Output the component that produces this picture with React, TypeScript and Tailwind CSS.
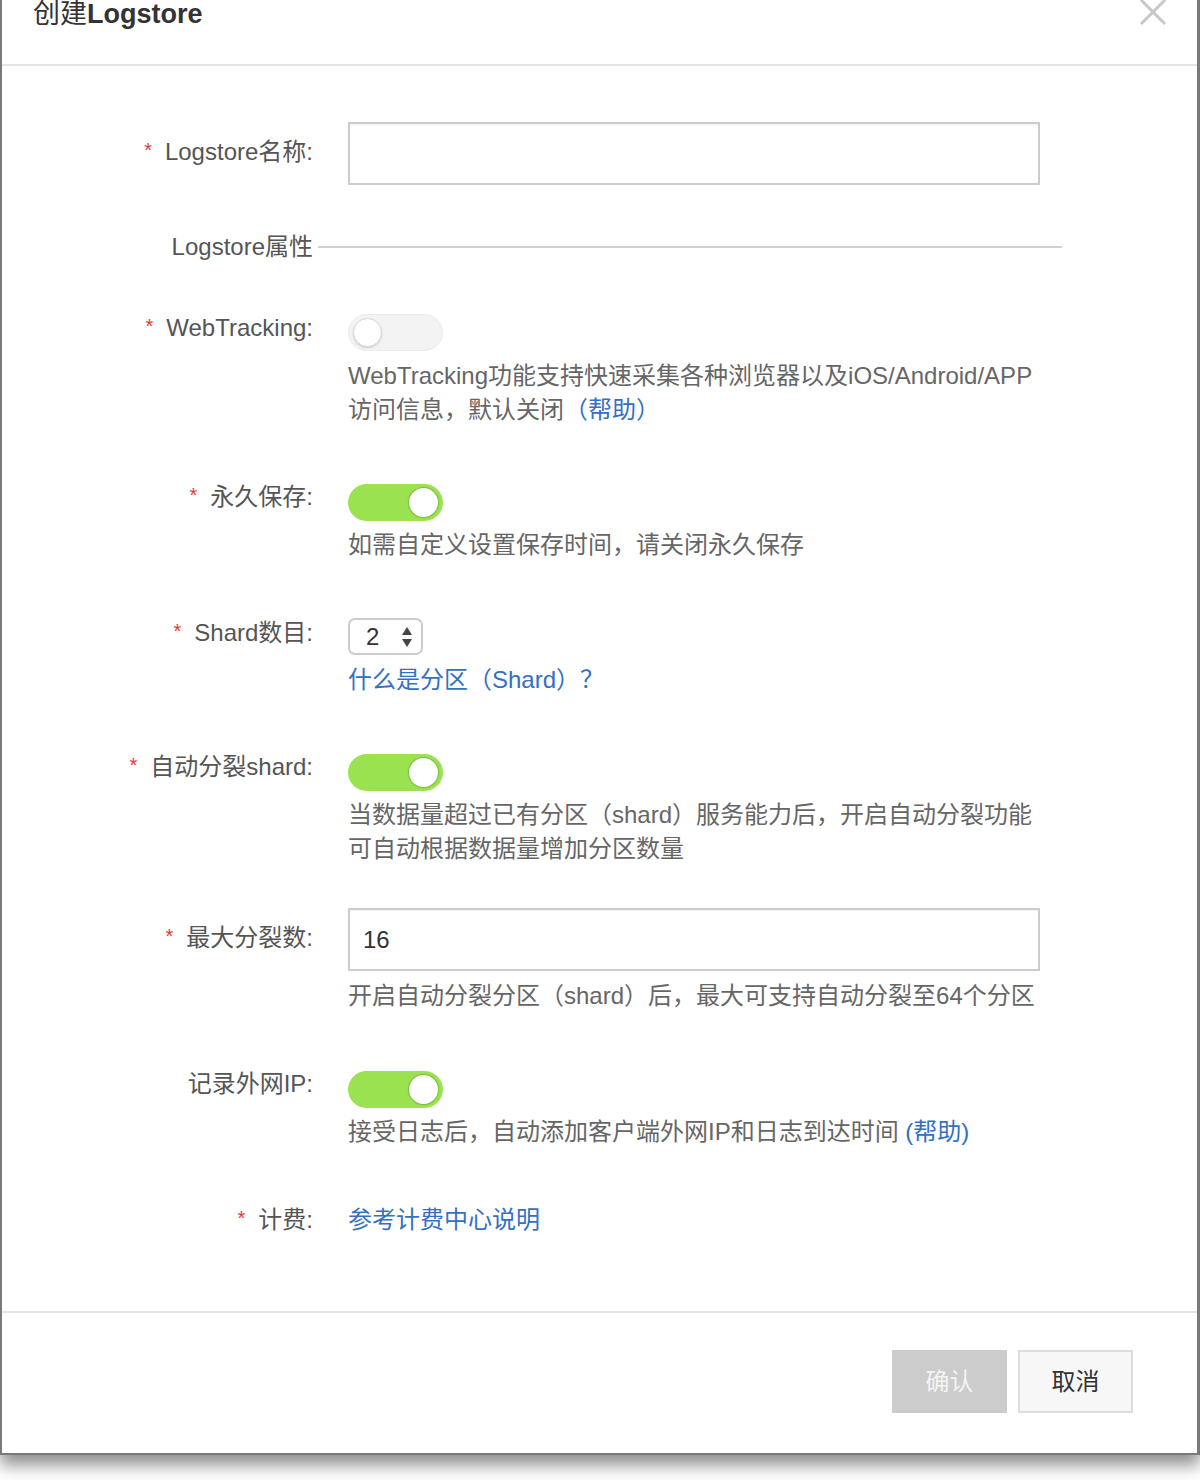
import React from "react";

const FONT = { fontFamily: '"Liberation Sans", "Noto Sans CJK SC", sans-serif' };

function Label({ text, required, mt }: { text: string; required?: boolean; mt: string }) {
  return (
    <div className={`w-[311px] shrink-0 text-right leading-[34px] text-[24px] text-[#555] whitespace-nowrap ${mt}`}>
      {required && <span className="text-[#e4393c] text-[20px] mr-[13px] relative -top-[3px]">*</span>}
      {text}
    </div>
  );
}

function SwitchOn() {
  return (
    <div className="relative w-[95px] h-[37px] rounded-full bg-[#9be250]">
      <div className="absolute right-[5px] top-[4px] w-[29px] h-[29px] rounded-full bg-white shadow-[0_0_1px_1px_rgba(60,120,20,0.35)]" />
    </div>
  );
}

function SwitchOff() {
  return (
    <div className="relative w-[95px] h-[37px] rounded-full bg-[#f3f3f3] border border-[#ececec]">
      <div className="absolute left-[4px] top-[3px] w-[29px] h-[29px] rounded-full bg-white border border-[#d8d8d8] shadow-[0_1px_2px_rgba(0,0,0,0.15)]" />
    </div>
  );
}

const desc = "text-[24px] leading-[34px] text-[#666] whitespace-nowrap";
const link = "text-[#3370c4]";

export default function App() {
  return (
    <div className="w-[1200px] h-[1480px] bg-white" style={FONT}>
      <div className="bg-white border-l-2 border-r-[3px] border-b-2 border-[#7a7a7a] shadow-[0_10px_16px_rgba(0,0,0,0.45)]">
        {/* header */}
        <div className="relative h-[66px] border-b-2 border-[#e4e4e4] pl-[31px]">
          <div className="text-[27px] leading-[28px] text-[#333]">
            创建<span className="font-bold">Logstore</span>
          </div>
          <svg className="absolute left-[1137px] top-0" width="28" height="26" viewBox="0 0 28 26">
            <path d="M2 0 L26 24 M26 0 L2 24" stroke="#c8c8c8" strokeWidth="3" fill="none" />
          </svg>
        </div>

        {/* body */}
        <div className="pt-[56px] pb-[73px]">
          {/* name */}
          <div className="flex items-start">
            <Label text="Logstore名称:" required mt="mt-[13px]" />
            <div className="ml-[35px]">
              <div className="w-[692px] h-[63px] border-2 border-[#cccccc] shadow-[inset_0_1px_2px_rgba(0,0,0,0.06)]" />
            </div>
          </div>

          {/* section */}
          <div className="flex items-center mt-[45px]">
            <div className="w-[311px] shrink-0 text-right leading-[34px] text-[24px] text-[#555]">Logstore属性</div>
            <div className="ml-[5px] w-[744px] h-[2px] bg-[#d0d0d0]" />
          </div>

          {/* webtracking */}
          <div className="flex items-start mt-[50px]">
            <Label text="WebTracking:" required mt="-mt-[3px]" />
            <div className="ml-[35px]">
              <SwitchOff />
              <div className={`${desc} mt-[8px]`}>
                WebTracking功能支持快速采集各种浏览器以及iOS/Android/APP
                <br />
                访问信息，默认关闭<span className={link}>（帮助）</span>
              </div>
            </div>
          </div>

          {/* 永久保存 */}
          <div className="flex items-start mt-[57px]">
            <Label text="永久保存:" required mt="-mt-[4px]" />
            <div className="ml-[35px]">
              <SwitchOn />
              <div className={`${desc} mt-[7px]`}>如需自定义设置保存时间，请关闭永久保存</div>
            </div>
          </div>

          {/* shard */}
          <div className="flex items-start mt-[56px]">
            <Label text="Shard数目:" required mt="-mt-[2px]" />
            <div className="ml-[35px]">
              <div className="relative w-[75px] h-[37px] rounded-[7px] border-2 border-[#cccccc] flex items-center pl-[16px] text-[24px] text-[#333]">
                2
                <svg className="absolute right-[8px] top-[6px]" width="12" height="22" viewBox="0 0 12 22">
                  <path d="M6 1 L11 9 L1 9 Z" fill="#444" />
                  <path d="M1 13 L11 13 L6 21 Z" fill="#444" />
                </svg>
              </div>
              <div className={`${desc} ${link} mt-[8px]`}>什么是分区（Shard）？</div>
            </div>
          </div>

          {/* 自动分裂 */}
          <div className="flex items-start mt-[57px]">
            <Label text="自动分裂shard:" required mt="-mt-[4px]" />
            <div className="ml-[35px]">
              <SwitchOn />
              <div className={`${desc} mt-[7px]`}>
                当数据量超过已有分区（shard）服务能力后，开启自动分裂功能
                <br />
                可自动根据数据量增加分区数量
              </div>
            </div>
          </div>

          {/* 最大分裂数 */}
          <div className="flex items-start mt-[42px]">
            <Label text="最大分裂数:" required mt="mt-[13px]" />
            <div className="ml-[35px]">
              <div className="w-[692px] h-[63px] border-2 border-[#cccccc] shadow-[inset_0_1px_2px_rgba(0,0,0,0.06)] flex items-center pl-[13px] text-[24px] text-[#333]">
                16
              </div>
              <div className={`${desc} mt-[8px]`}>开启自动分裂分区（shard）后，最大可支持自动分裂至64个分区</div>
            </div>
          </div>

          {/* 记录外网IP */}
          <div className="flex items-start mt-[58px]">
            <Label text="记录外网IP:" mt="-mt-[4px]" />
            <div className="ml-[35px]">
              <SwitchOn />
              <div className={`${desc} mt-[7px]`}>
                接受日志后，自动添加客户端外网IP和日志到达时间 <span className={link}>(帮助)</span>
              </div>
            </div>
          </div>

          {/* 计费 */}
          <div className="flex items-start mt-[54px]">
            <Label text="计费:" required mt="mt-0" />
            <div className="ml-[35px]">
              <div className={`${desc} ${link}`}>参考计费中心说明</div>
            </div>
          </div>
        </div>

        {/* footer */}
        <div className="border-t-2 border-[#e4e4e4] pt-[37px] pb-[40px] pr-[64px] flex justify-end gap-[11px]">
          <div className="w-[115px] h-[63px] bg-[#cccccc] text-[#f4f4f4] text-[24px] flex items-center justify-center">确认</div>
          <div className="w-[115px] h-[63px] bg-[#f7f7f7] border-2 border-[#dddddd] text-[#333] text-[24px] flex items-center justify-center">取消</div>
        </div>
      </div>
    </div>
  );
}
